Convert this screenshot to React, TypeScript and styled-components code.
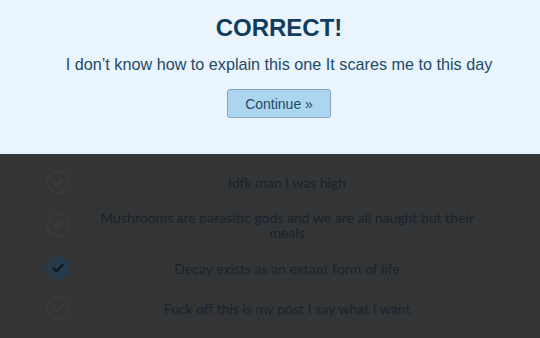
import React from 'react';
import styled, { createGlobalStyle } from 'styled-components';

const answers = [
  { text: 'Idfk man I was high', picked: false },
  { text: 'Mushrooms are parasitic gods and we are all naught but their meals', picked: false },
  { text: 'Decay exists as an extant form of life', picked: true },
  { text: 'Fuck off this is my post I say what I want', picked: false },
];

const Check = ({ color }: { color: string }) => (
  <svg width="14" height="14" viewBox="0 0 14 14">
    <path d="M2.5 7.2 L5.6 10.2 L11.6 3.8" fill="none" stroke={color} strokeWidth="2.2" strokeLinecap="round" strokeLinejoin="round" />
  </svg>
);

const App = () => (
  <>
    <GlobalStyle />
    <Page>
      <Banner>
        <Title>CORRECT!</Title>
        <Message>I don’t know how to explain this one It scares me to this day</Message>
        <ContinueButton>Continue »</ContinueButton>
      </Banner>
      <AnswerList>
        {answers.map((a) => (
          <AnswerRow key={a.text}>
            <Bubble picked={a.picked}>
              <Check color={a.picked ? '#0e171e' : '#3d3b39'} />
            </Bubble>
            <AnswerText>{a.text}</AnswerText>
          </AnswerRow>
        ))}
      </AnswerList>
    </Page>
  </>
);

export default App;

const GlobalStyle = createGlobalStyle`
  html, body {
    margin: 0;
    padding: 0;
    background: #333436;
  }
`;

const Page = styled.div`
  width: 540px;
  height: 338px;
  overflow: hidden;
  display: flex;
  flex-direction: column;
`;

const Banner = styled.div`
  height: 154px;
  box-sizing: border-box;
  padding: 14px 0 0 18px;
  background: #eaf4fc;
  display: flex;
  flex-direction: column;
  align-items: center;
  font-family: 'Liberation Sans', Arial, sans-serif;
`;

const Title = styled.h1`
  margin: 0;
  font-size: 24px;
  line-height: 28px;
  font-weight: bold;
  color: #123c5c;
`;

const Message = styled.p`
  margin: 12px 0 0;
  font-size: 16.2px;
  line-height: 20px;
  color: #234a68;
`;

const ContinueButton = styled.button`
  margin-top: 15px;
  width: 104px;
  height: 29px;
  box-sizing: border-box;
  padding: 0;
  background: #acd6f0;
  border: 1px solid #87a6bd;
  border-radius: 3px;
  font-family: 'Liberation Sans', Arial, sans-serif;
  font-size: 14px;
  color: #1f4968;
`;

const AnswerList = styled.div`
  padding: 8px 48px 0 46px;
  display: flex;
  flex-direction: column;
`;

const AnswerRow = styled.div`
  display: grid;
  grid-template-columns: 24px 1fr;
  column-gap: 12px;
  align-items: center;
  padding: 8px 0;
`;

const Bubble = styled.div<{ picked: boolean }>`
  width: 24px;
  height: 24px;
  box-sizing: border-box;
  border-radius: 50%;
  display: flex;
  align-items: center;
  justify-content: center;
  background: ${(p) => (p.picked ? '#273a49' : 'transparent')};
  border: ${(p) => (p.picked ? 'none' : '2px solid #3a3937')};
`;

const AnswerText = styled.div`
  text-align: center;
  font-family: Lato, 'Open Sans', sans-serif;
  font-size: 14px;
  line-height: 15px;
  color: #19232d;
`;
